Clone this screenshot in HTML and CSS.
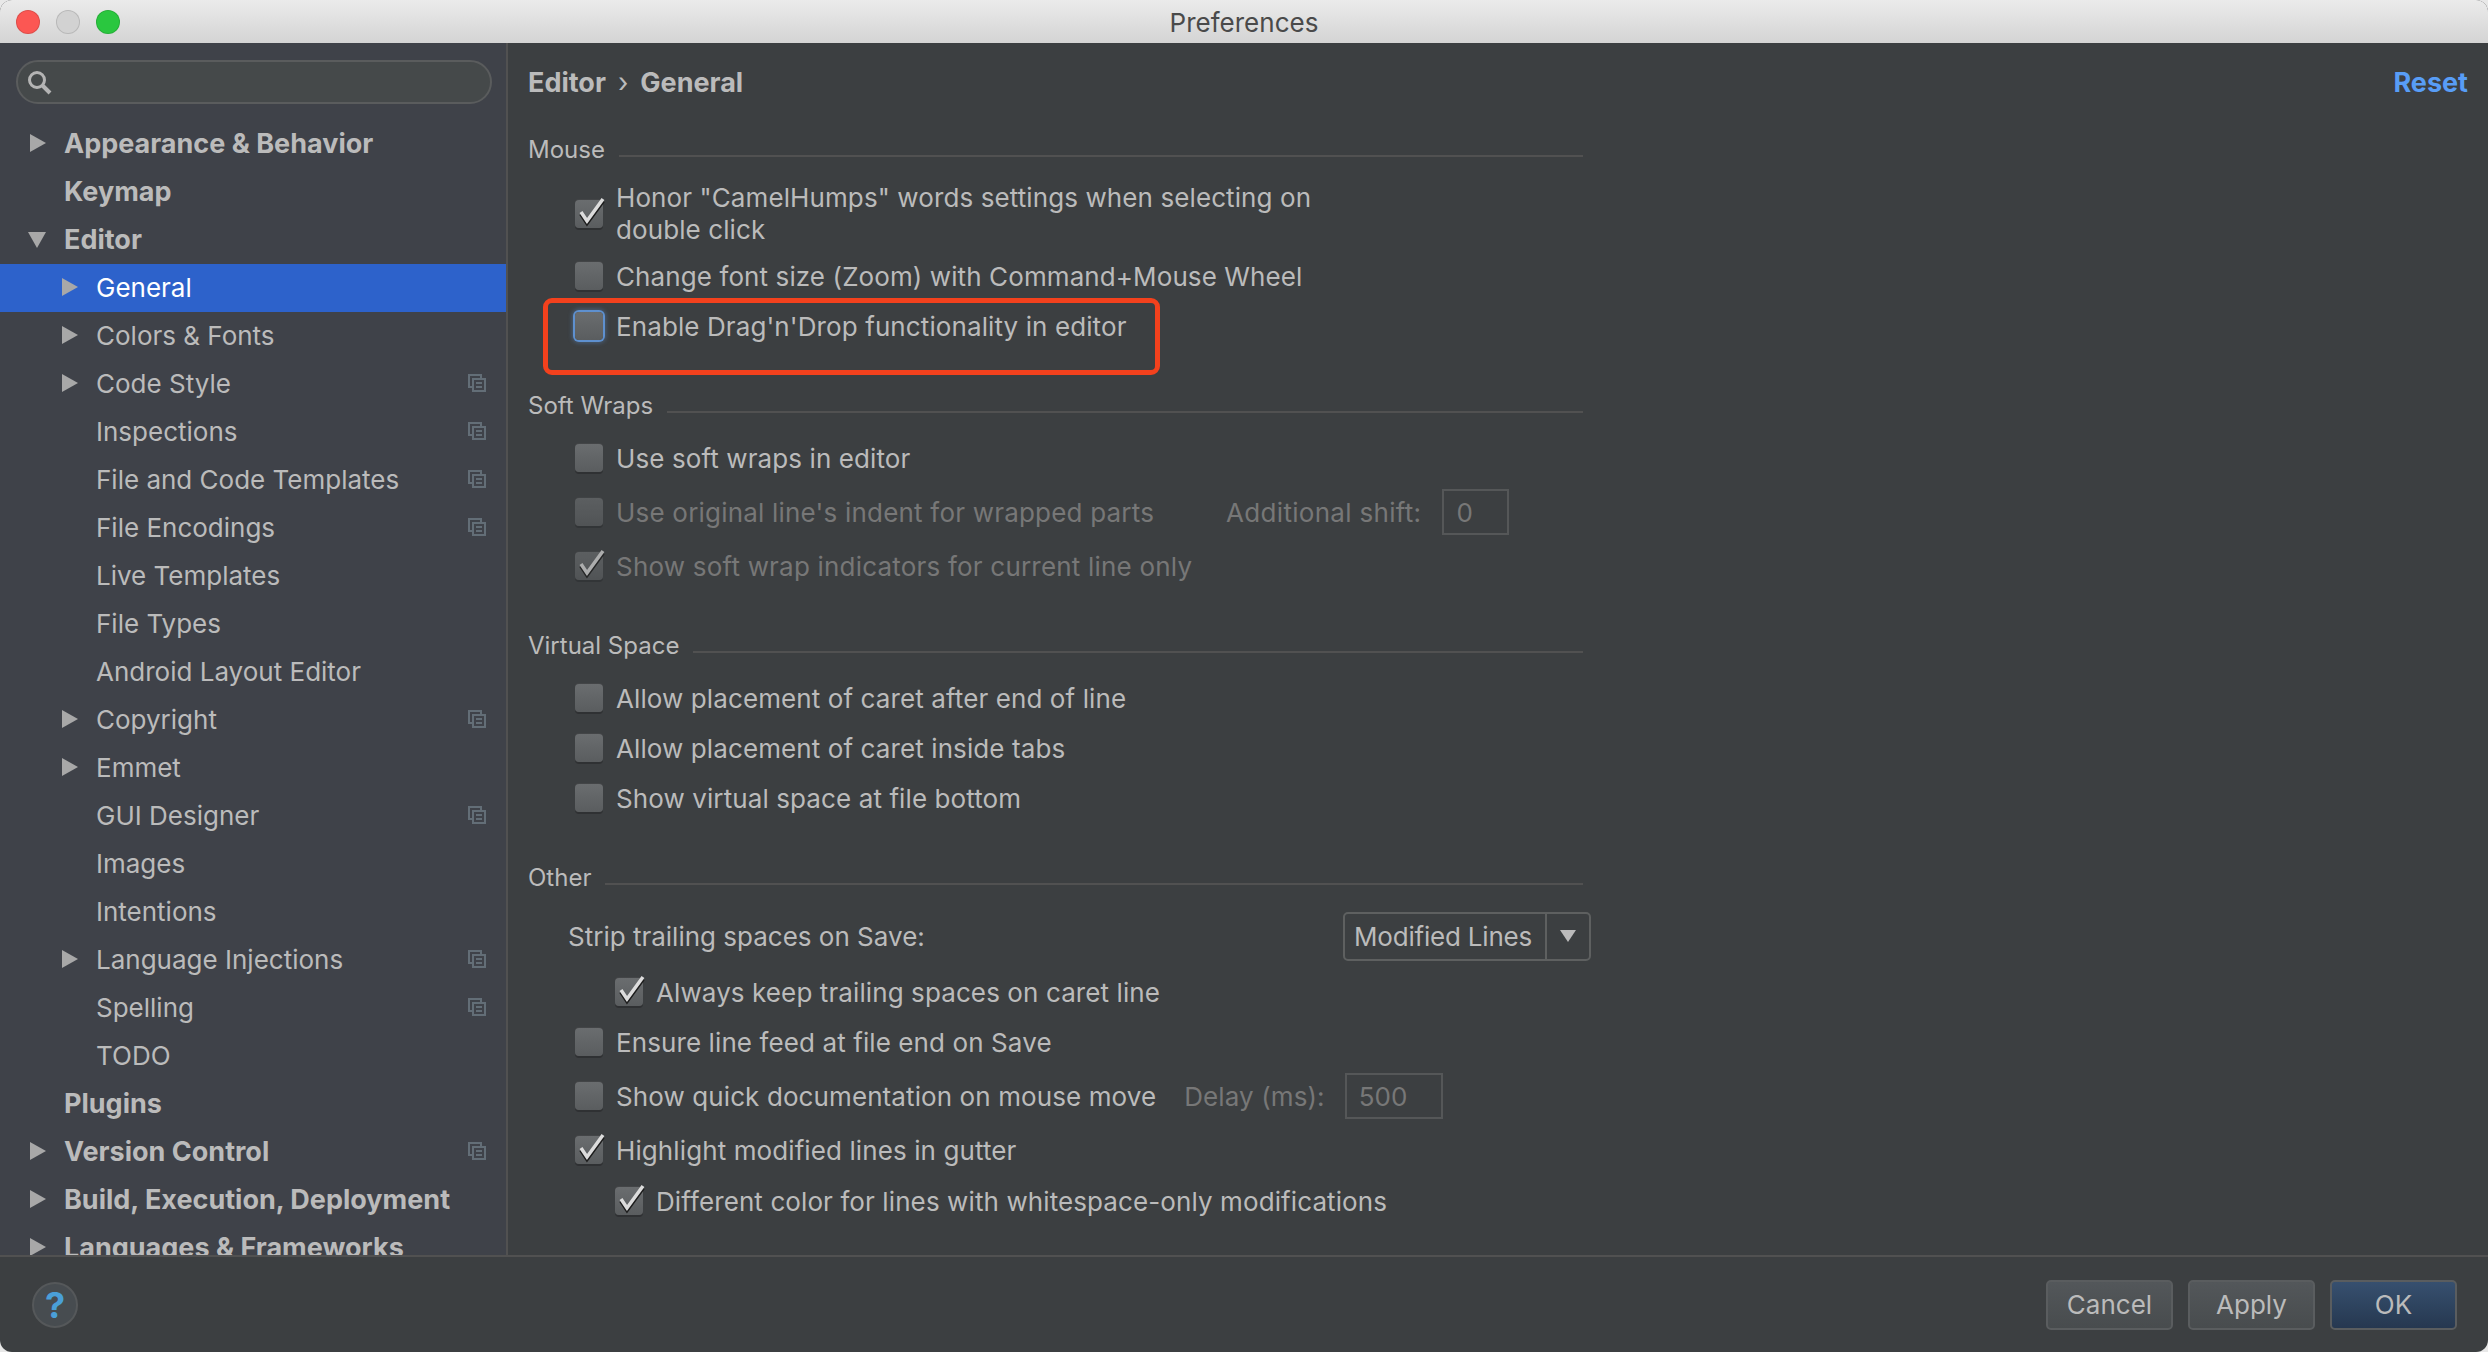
FILE: index.html
```html
<!DOCTYPE html>
<html lang="en">
<head>
  <meta charset="UTF-8">
  <title>Preferences</title>
  <link rel="stylesheet" href="styles.css">
</head>
<body>
<svg class="defs" width="0" height="0">
  <defs>
    <g id="tick" fill="none">
      <path d="M6 14 L12 23 L28 1" stroke="#1c1c1c" stroke-width="4"/>
      <path d="M6 12 L12 21 L28 -1" stroke="#dcdcdc" stroke-width="3.500"/>
    </g>
    <g id="copy" fill="none" stroke="currentColor" stroke-width="2">
      <path d="M13 5 V1 H1 V13 H5"/>
      <rect x="5" y="5" width="12" height="12"/>
      <path d="M8 9 H14 M8 13 H14"/>
    </g>
  </defs>
</svg>
<div class="window">
  <div class="titlebar">
    <div class="lights">
      <span class="light red"></span>
      <span class="light grey"></span>
      <span class="light green"></span>
    </div>
    Preferences
  </div>

  <div class="content">
    <div class="sidebar">
      <div class="search">
        <svg width="26" height="26" viewBox="0 0 26 26" fill="none" stroke="#b4b4b4">
          <circle cx="11" cy="11" r="7.500" stroke-width="3"/>
          <path d="M16.500 16.500 L24 24" stroke-width="4"/>
        </svg>
      </div>
      <ul class="tree">
        <li class="top closed">Appearance &amp; Behavior</li>
        <li class="top">Keymap</li>
        <li class="top open">Editor</li>
        <li class="sub closed selected">General</li>
        <li class="sub closed">Colors &amp; Fonts</li>
        <li class="sub closed">Code Style <svg class="copy" width="18" height="18"><use href="#copy"/></svg></li>
        <li class="sub">Inspections <svg class="copy" width="18" height="18"><use href="#copy"/></svg></li>
        <li class="sub">File and Code Templates <svg class="copy" width="18" height="18"><use href="#copy"/></svg></li>
        <li class="sub">File Encodings <svg class="copy" width="18" height="18"><use href="#copy"/></svg></li>
        <li class="sub">Live Templates</li>
        <li class="sub">File Types</li>
        <li class="sub">Android Layout Editor</li>
        <li class="sub closed">Copyright <svg class="copy" width="18" height="18"><use href="#copy"/></svg></li>
        <li class="sub closed">Emmet</li>
        <li class="sub">GUI Designer <svg class="copy" width="18" height="18"><use href="#copy"/></svg></li>
        <li class="sub">Images</li>
        <li class="sub">Intentions</li>
        <li class="sub closed">Language Injections <svg class="copy" width="18" height="18"><use href="#copy"/></svg></li>
        <li class="sub">Spelling <svg class="copy" width="18" height="18"><use href="#copy"/></svg></li>
        <li class="sub">TODO</li>
        <li class="top">Plugins</li>
        <li class="top closed">Version Control <svg class="copy" width="18" height="18"><use href="#copy"/></svg></li>
        <li class="top closed">Build, Execution, Deployment</li>
        <li class="top closed">Languages &amp; Frameworks</li>
      </ul>
    </div>

    <div class="main">
      <div class="crumbs">
        <span>Editor<i class="chev">›</i>General</span>
        <a class="reset">Reset</a>
      </div>

      <div class="legend first"><span>Mouse</span></div>
      <div class="row two-line">
        <span class="box checked"><svg width="28" height="28" viewBox="0 0 28 28"><use href="#tick"/></svg></span>
        <span>Honor "CamelHumps" words settings when selecting on<br>double click</span>
      </div>
      <div class="row tight"><span class="box"></span>Change font size (Zoom) with Command+Mouse Wheel</div>
      <div class="row"><span class="box focused"></span>Enable Drag'n'Drop functionality in editor<span class="redbox"></span></div>

      <div class="legend"><span>Soft Wraps</span></div>
      <div class="row after-legend"><span class="box"></span>Use soft wraps in editor</div>
      <div class="row loose off"><span class="box"></span>Use original line's indent for wrapped parts
        <span class="field-label shift-label">Additional shift:</span><span class="field shift-field">0</span></div>
      <div class="row loose off">
        <span class="box checked"><svg width="28" height="28" viewBox="0 0 28 28"><use href="#tick"/></svg></span>Show soft wrap indicators for current line only
      </div>

      <div class="legend"><span>Virtual Space</span></div>
      <div class="row after-legend"><span class="box"></span>Allow placement of caret after end of line</div>
      <div class="row"><span class="box"></span>Allow placement of caret inside tabs</div>
      <div class="row"><span class="box"></span>Show virtual space at file bottom</div>

      <div class="legend"><span>Other</span></div>
      <div class="row strip">
        Strip trailing spaces on Save:
        <div class="combo">
          <span class="combo-value">Modified Lines</span>
          <span class="combo-arrow"></span>
        </div>
      </div>
      <div class="row sub-strip nested">
        <span class="box checked"><svg width="28" height="28" viewBox="0 0 28 28"><use href="#tick"/></svg></span>Always keep trailing spaces on caret line
      </div>
      <div class="row"><span class="box"></span>Ensure line feed at file end on Save</div>
      <div class="row loose"><span class="box"></span>Show quick documentation on mouse move
        <span class="field-label delay-label">Delay (ms):</span><span class="field delay-field">500</span></div>
      <div class="row loose">
        <span class="box checked"><svg width="28" height="28" viewBox="0 0 28 28"><use href="#tick"/></svg></span>Highlight modified lines in gutter
      </div>
      <div class="row whitespace nested">
        <span class="box checked"><svg width="28" height="28" viewBox="0 0 28 28"><use href="#tick"/></svg></span>Different color for lines with whitespace-only modifications
      </div>
    </div>
  </div>

  <div class="footer">
    <span class="help">?</span>
    <div class="buttons">
      <button>Cancel</button>
      <button>Apply</button>
      <button class="ok">OK</button>
    </div>
  </div>
</div>
</body>
</html>
```

FILE: styles.css
```css
:root {
  --bg: #3c3f41;
  --side: #3f4249;
  --text: #bbbbbb;
  --off: #777777;
  --line: #515151;
}

* { box-sizing: border-box; }

html, body {
  margin: 0;
  height: 100%;
  background: #e8e8e8;
  overflow: hidden;
}

body {
  font-family: Inter, "Liberation Sans", sans-serif;
  font-size: 26px;
  color: var(--text);
}

.defs { position: absolute; }

.window {
  height: 1352px;
  display: flex;
  flex-direction: column;
  background: var(--bg);
  border-radius: 12px;
  overflow: hidden;
}

/* title bar */
.titlebar {
  height: 43px;
  flex: none;
  position: relative;
  display: flex;
  align-items: center;
  justify-content: center;
  padding-top: 1px;
  background: linear-gradient(#ebebeb, #d4d4d4);
  color: #4a4a4a;
  font-size: 26px;
}
.lights {
  position: absolute;
  left: 16px;
  top: 10px;
  display: flex;
  gap: 16px;
}
.light {
  width: 24px;
  height: 24px;
  border-radius: 50%;
  border: 1px solid rgba(0,0,0,0.12);
}
.light.red { background: #fc5753; }
.light.grey { background: #d2d2d2; }
.light.green { background: #2ac73f; }

.content {
  flex: 1;
  min-height: 0;
  display: flex;
}

/* sidebar */
.sidebar {
  width: 508px;
  flex: none;
  background: var(--side);
  border-right: 2px solid var(--line);
  overflow: hidden;
}
.search {
  height: 44px;
  margin: 17px 14px 0 16px;
  padding-left: 8px;
  display: flex;
  align-items: center;
  background: #45494a;
  border: 2px solid #5a5c5d;
  border-radius: 22px;
}
.tree {
  list-style: none;
  margin: 16px 0 0;
  padding: 0;
}
.tree li {
  height: 48px;
  display: flex;
  align-items: center;
  padding-bottom: 2px;
  position: relative;
}
.tree .top { padding-left: 64px; font-weight: 700; font-size: 27px; }
.tree .sub { padding-left: 96px; }
.tree .selected { background: #2d62cb; color: #fff; }
.tree .closed::before, .tree .open::before {
  content: "";
  position: absolute;
  border-style: solid;
  border-color: transparent;
}
.tree .closed::before {
  border-width: 9px 0 9px 16px;
  border-left-color: #a8a8a8;
  top: 14px;
}
.tree .top.closed::before { left: 30px; }
.tree .sub.closed::before { left: 62px; }
.tree .open::before {
  border-width: 16px 9px 0 9px;
  border-top-color: #a8a8a8;
  top: 16px;
  left: 28px;
}
.copy {
  position: absolute;
  left: 468px;
  top: 14px;
  color: #636e77;
  overflow: visible;
}

/* main pane */
.main {
  flex: 1;
  padding: 15px 20px 0 20px;
  overflow: hidden;
}
.crumbs {
  height: 48px;
  display: flex;
  align-items: center;
  justify-content: space-between;
  font-weight: 700;
  font-size: 27px;
}
.chev {
  font-style: normal;
  font-weight: 400;
  margin: 0 12px;
}
.reset { color: #589df6; }

.legend {
  width: 1055px;
  height: 32px;
  margin-top: 47px;
  display: flex;
  align-items: center;
  gap: 14px;
  font-size: 24px;
}
.legend::after {
  content: "";
  flex: 1;
  height: 2px;
  margin-top: 14px;
  background: var(--line);
}
.legend.first { margin-top: 27px; }

.row {
  width: 1055px;
  height: 32px;
  margin-top: 18px;
  padding-left: 47px;
  display: flex;
  align-items: center;
  white-space: nowrap;
  letter-spacing: 0.1px;
  position: relative;
}
.row.tight { margin-top: 14px; }
.row.loose { margin-top: 22px; }
.row.after-legend { margin-top: 21px; }
.row.sub-strip { margin-top: 24px; }
.row.whitespace { margin-top: 19px; }
.row.two-line { height: 64px; line-height: 32px; margin-top: 17px; }
.row.nested { padding-left: 87px; }
.row.off { color: var(--off); letter-spacing: 0.2px; }

.row.strip {
  margin-top: 27px;
  padding-left: 40px;
  justify-content: space-between;
  letter-spacing: 0;
}

.box {
  width: 28px;
  height: 28px;
  flex: none;
  margin-right: 13px;
  position: relative;
  background: linear-gradient(#6a6d6f, #5a5d5f);
  border-radius: 4px;
  box-shadow: 0 2px 0 #2f3133, 0 -1px 0 #434547;
}
.row.off .box { opacity: 0.7; }
.box svg {
  position: absolute;
  left: 0;
  top: 0;
  overflow: visible;
}
.box.focused {
  box-shadow: 0 0 0 2px #5e90cf, 0 0 4px 3px rgba(94,144,207,0.4);
}

.redbox {
  position: absolute;
  left: 15px;
  top: -12px;
  width: 617px;
  height: 77px;
  border: 5px solid #f3411d;
  border-radius: 9px;
}

.field-label { color: var(--off); }
.field {
  flex: none;
  height: 46px;
  display: flex;
  align-items: center;
  border: 2px solid #555758;
  color: var(--off);
  padding-left: 12px;
}
.shift-label { margin-left: 72px; letter-spacing: 0.3px; }
.shift-field { width: 67px; margin-left: 21px; }
.delay-label { margin-left: 28px; }
.delay-field { width: 98px; margin-left: 20px; }

.combo {
  width: 248px;
  height: 49px;
  margin-right: -8px;
  display: flex;
  border: 2px solid #5e6060;
  border-radius: 5px;
}
.combo-value {
  flex: 1;
  display: flex;
  align-items: center;
  padding-left: 9px;
  letter-spacing: -0.2px;
  border-right: 2px solid #5e6060;
}
.combo-arrow {
  width: 42px;
  display: flex;
  align-items: center;
  justify-content: center;
}
.combo-arrow::after {
  content: "";
  border-style: solid;
  border-width: 12px 8px 0 8px;
  border-color: #bbb transparent transparent;
}

/* footer */
.footer {
  height: 97px;
  flex: none;
  border-top: 2px solid var(--line);
  display: flex;
  align-items: center;
  justify-content: space-between;
  padding: 0 31px 0 32px;
}
.help {
  width: 46px;
  height: 46px;
  display: flex;
  align-items: center;
  justify-content: center;
  border-radius: 50%;
  border: 2px solid #55585a;
  background: #474c50;
  color: #4a9fd8;
  font-weight: 700;
  font-size: 36px;
}
.buttons {
  display: flex;
  gap: 15px;
}
button {
  width: 127px;
  height: 50px;
  font: inherit;
  color: var(--text);
  background: linear-gradient(#53575a, #484c4e);
  border: 2px solid #5a5d5f;
  border-radius: 5px;
}
button.ok {
  background: linear-gradient(#37506f, #263850);
}
```
